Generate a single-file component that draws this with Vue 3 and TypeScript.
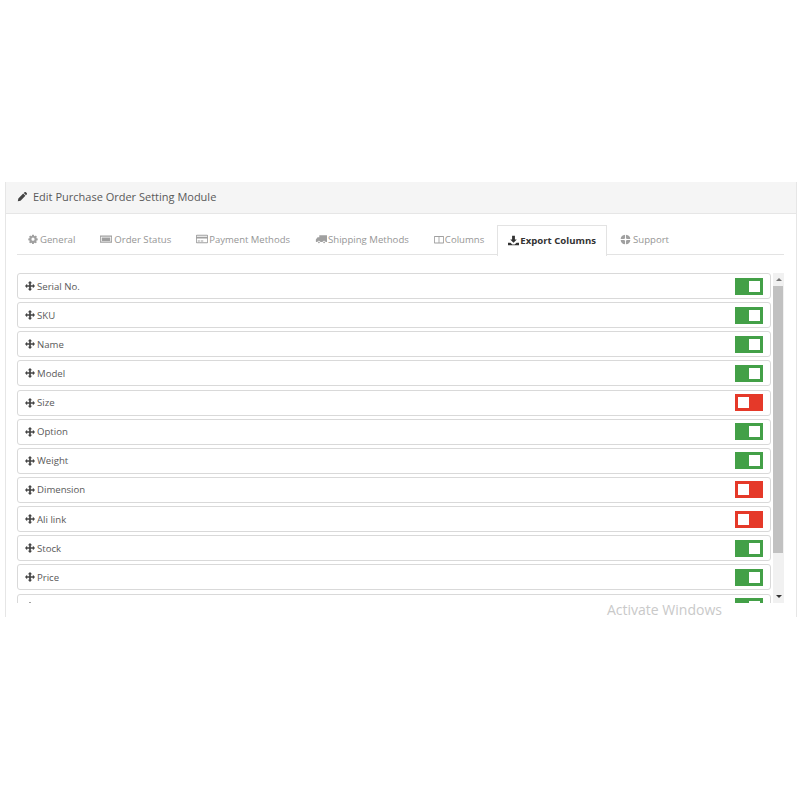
<template>
  <div class="page">
    <div class="panel">
      <div class="panel-heading">
        <svg class="ico head-ico" viewBox="0 0 14 14"><path :d="icons.pencil" /></svg>
        <span>Edit Purchase Order Setting Module</span>
      </div>
      <div class="panel-body">
        <ul class="tabs">
          <li v-for="tab in tabs" :key="tab.label" class="tab" :class="[`tab-${tab.icon}`, { active: tab.active }]">
            <svg class="ico" viewBox="0 0 14 14"><path :d="icons[tab.icon]" fill-rule="evenodd" /></svg>
            {{ tab.label }}
          </li>
        </ul>
        <div class="list-wrap">
          <div class="list">
            <div v-for="col in columns" :key="col.name" class="row">
              <svg class="ico move" viewBox="0 0 14 14"><path :d="icons.move" /></svg>
              <span class="row-name">{{ col.name }}</span>
              <span class="toggle" :class="col.on ? 'on' : 'off'"><i class="knob" /></span>
            </div>
          </div>
          <div class="scrollbar">
            <span class="arrow up" />
            <div class="track"><div class="thumb" /></div>
            <span class="arrow down" />
          </div>
        </div>
      </div>
      <div class="watermark">Activate Windows</div>
    </div>
  </div>
</template>

<script setup lang="ts">
const icons: Record<string, string> = {
  pencil: 'M9.6 1.6c.5-.5 1.2-.5 1.7 0l1.1 1.1c.5.5.5 1.2 0 1.7l-1 1-2.8-2.8zM7.9 3.3l2.8 2.8-6.2 6.2-3.5.8.7-3.6z',
  cog: 'M5.8 1h2.4l.3 1.6 1 .4 1.4-.9 1.6 1.6-.9 1.4.4 1 1.6.3v2.4l-1.6.3-.4 1-.1.1.9 1.3-1.6 1.6-1.4-.9-1 .4-.3 1.6H5.8l-.3-1.6-1-.4-1.4.9-1.6-1.6.9-1.4-.4-1-1.6-.3V6.4L2 6.100l.4-1-.9-1.400 1.600-1.600 1.400.9 1-.4zM7 5a2.200 2.200 0 1 0 0 4.400A2.200 2.200 0 0 0 7 5z',
  money: 'M0 3h14v8.500H0zM1 4.500v5.500h12V4.500z M2 5.200h10v4.100H2z',
  card: 'M1 2h12c.6 0 1 .4 1 1v8c0 .6-.4 1-1 1H1c-.6 0-1-.4-1-1V3c0-.6.4-1 1-1zM1 3.200v1.300h12V3.200zM1 6.500v4.300h12V6.500zM2 8.800h2.500v1H2zM5.500 8.800h3v1h-3z',
  truck: 'M5 2.500h8.500c.3 0 .5.2.5.5v7.500h-1.700a1.800 1.800 0 0 0-3.500 0H6.300a1.800 1.800 0 0 0-3.500 0H1.500c-.3 0-.5-.2-.5-.5V7.500L3 5h2zM4.600 9.800a1 1 0 1 0 0 2.100 1 1 0 0 0 0-2.100zM10.600 9.800a1 1 0 1 0 0 2.100 1 1 0 0 0 0-2.100z',
  columns: 'M1 2h12c.6 0 1 .4 1 1v8.500c0 .6-.4 1-1 1H1c-.6 0-1-.4-1-1V3c0-.6.4-1 1-1zM1.200 3.400v7.900h5.200V3.400zM7.600 3.400v7.900h5.200V3.400z',
  download: 'M5.200 1h3.600v4.800h2.400L7 10 2.800 5.800h2.400zM0 9.800h3.200L5.500 12h3l2.300-2.200H14V13H0z',
  support: 'M7.600.83A6.200 6.200 0 0 1 13.170 6.400H8.480A1.600 1.600 0 0 0 7.600 5.520zM13.170 7.600A6.200 6.200 0 0 1 7.600 13.170V8.480A1.600 1.600 0 0 0 8.480 7.600zM6.400 13.170A6.200 6.200 0 0 1 .83 7.600H5.520A1.600 1.600 0 0 0 6.400 8.480zM.83 6.400A6.200 6.200 0 0 1 6.400.83V5.520A1.600 1.600 0 0 0 5.520 6.400z',
  move: 'M7 0l3 3H8.200v2.800H11V4l3 3-3 3V8.200H8.200V11H10l-3 3-3-3h1.800V8.200H3V10L0 7l3-3v1.800h2.800V3H4z',
}

const tabs = [
  { label: 'General', icon: 'cog' },
  { label: 'Order Status', icon: 'money' },
  { label: 'Payment Methods', icon: 'card' },
  { label: 'Shipping Methods', icon: 'truck' },
  { label: 'Columns', icon: 'columns' },
  { label: 'Export Columns', icon: 'download', active: true },
  { label: 'Support', icon: 'support' },
]

const columns = [
  { name: 'Serial No.', on: true },
  { name: 'SKU', on: true },
  { name: 'Name', on: true },
  { name: 'Model', on: true },
  { name: 'Size', on: false },
  { name: 'Option', on: true },
  { name: 'Weight', on: true },
  { name: 'Dimension', on: false },
  { name: 'Ali link', on: false },
  { name: 'Stock', on: true },
  { name: 'Price', on: true },
  { name: 'Quantity', on: true },
]
</script>

<style>
html, body { background: #fff; }
</style>

<style scoped>
.page {
  width: 800px;
  height: 800px;
  padding: 182px 3px 0 5px;
  box-sizing: border-box;
  font-family: "Open Sans", "Liberation Sans", sans-serif;
}
.panel {
  position: relative;
  height: 435px;
  border-left: 1px solid #e6e6e6;
  border-right: 1px solid #e6e6e6;
  background: #fff;
}
.panel-heading {
  display: flex;
  align-items: center;
  gap: 5px;
  box-sizing: content-box;
  height: 29px;
  padding: 0 0 2px 11px;
  background: #f5f5f5;
  border-bottom: 1px solid #e6e6e6;
  font-size: 11px;
  color: #595959;
}
.ico { width: 10px; height: 10px; fill: currentColor; flex-shrink: 0; }
.head-ico { width: 11px; height: 11px; color: #444; }
.panel-body { padding: 11px 11px 0 11px; }
.tabs {
  display: flex;
  list-style: none;
  margin: 0;
  padding: 0;
  height: 29px;
  width: 767px;
  border-bottom: 1px solid #e3e3e3;
}
.tab {
  display: flex;
  align-items: center;
  gap: 2px;
  box-sizing: border-box;
  height: 30px;
  padding: 0 12px 2px 11px;
  margin-right: 2px;
  font-size: 9.6px;
  color: #969696;
  white-space: nowrap;
}
.tab .ico { color: #a0a0a0; width: 12px; height: 12px; }
.tab-cog .ico { width: 10px; height: 10px; }
.tab-support .ico,
.tab-download .ico { width: 11px; height: 11px; }
.tab-columns .ico { width: 10px; height: 11px; }
.tab-card { gap: 1px; font-size: 9.5px; }
.tab-truck { gap: 1px; }
.tab-columns { gap: 1px; margin-right: 1px; }
.tab.active {
  height: 31px;
  padding: 0 10px 2px;
  gap: 1px;
  background: #fff;
  border: 1px solid #e3e3e3;
  border-bottom: none;
  color: #333;
  font-weight: 700;
}
.tab.active .ico { color: #333; }
.list-wrap {
  display: flex;
  width: 767px;
  height: 330px;
  margin-top: 18px;
  overflow: hidden;
}
.list { width: 754px; flex-shrink: 0; }
.row {
  display: flex;
  align-items: center;
  box-sizing: border-box;
  height: 26px;
  margin-bottom: 3.15px;
  padding: 0 7px 0 7px;
  border: 1px solid #d9d9d9;
  border-radius: 3px;
  font-size: 9.6px;
  color: #595959;
  background: #fff;
}
.move { color: #444; margin-right: 2px; }
.row-name { flex: 1; }
.toggle {
  display: flex;
  align-items: center;
  width: 28px;
  height: 17px;
  box-sizing: border-box;
  padding: 0 3px;
}
.toggle.on { background: #43a047; justify-content: flex-end; }
.toggle.off { background: #e53929; justify-content: flex-start; }
.knob { width: 11px; height: 11px; background: #fff; }
.scrollbar {
  display: flex;
  flex-direction: column;
  align-items: center;
  width: 11px;
  margin-left: 2px;
  height: 100%;
  background: #f1f1f1;
}
.arrow { width: 0; height: 0; border-left: 3px solid transparent; border-right: 3px solid transparent; margin: 5px 0; }
.arrow.up { border-bottom: 3px solid #777; }
.arrow.down { border-top: 3px solid #333; }
.track { flex: 1; width: 100%; }
.thumb { width: 10px; height: 267px; background: #c1c1c1; }
.watermark {
  position: absolute;
  left: 601px;
  top: 419px;
  font-size: 14px;
  line-height: 18px;
  color: #c9c9c9;
  background: transparent;
}
</style>
